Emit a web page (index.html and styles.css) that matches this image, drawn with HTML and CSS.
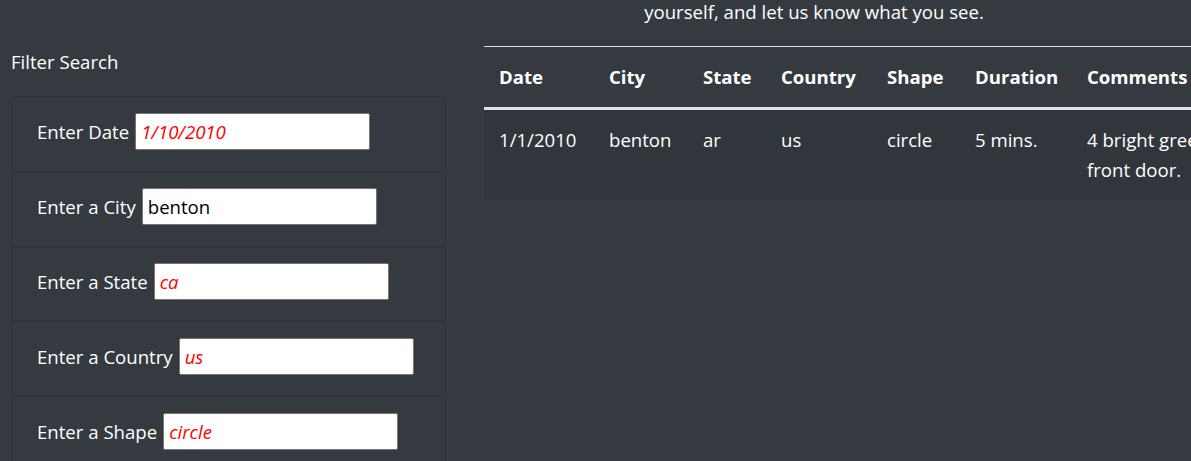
FILE: index.html
```html
<!DOCTYPE html>
<html lang="en">
<head>
<meta charset="utf-8">
<title>UFO Sightings</title>
<link rel="stylesheet" href="styles.css">
</head>
<body>
<div class="page">
  <aside class="sidebar">
    <h2 class="filter-title">Filter Search</h2>
    <ul class="filters">
      <li class="filter-item"><label class="filter-label" for="date">Enter Date</label><input class="filter-input" id="date" type="text" placeholder="1/10/2010"></li>
      <li class="filter-item"><label class="filter-label" for="city">Enter a City</label><input class="filter-input" id="city" type="text" value="benton"></li>
      <li class="filter-item"><label class="filter-label" for="state">Enter a State</label><input class="filter-input" id="state" type="text" placeholder="ca"></li>
      <li class="filter-item"><label class="filter-label" for="country">Enter a Country</label><input class="filter-input" id="country" type="text" placeholder="us"></li>
      <li class="filter-item"><label class="filter-label" for="shape">Enter a Shape</label><input class="filter-input" id="shape" type="text" placeholder="circle"></li>
    </ul>
  </aside>
  <main class="content">
    <p class="intro">yourself, and let us know what you see.</p>
    <table class="ufo-table">
      <thead>
        <tr>
          <th class="col-date">Date</th>
          <th class="col-city">City</th>
          <th class="col-state">State</th>
          <th class="col-country">Country</th>
          <th class="col-shape">Shape</th>
          <th class="col-duration">Duration</th>
          <th class="col-comments">Comments</th>
        </tr>
      </thead>
      <tbody>
        <tr>
          <td>1/1/2010</td>
          <td>benton</td>
          <td>ar</td>
          <td>us</td>
          <td>circle</td>
          <td>5 mins.</td>
          <td class="comment">4 bright green circles high in the sky going in circles then one of the four lights went in the direction of my<br>front door.</td>
        </tr>
      </tbody>
    </table>
  </main>
</div>
</body>
</html>
```

FILE: styles.css
```css
html {
  overflow: hidden;
}

body {
  margin: 0;
  background: #343a40;
  color: #ffffff;
  font-family: "Open Sans", "Noto Sans", sans-serif;
  font-size: 18.6px;
  line-height: 28.8px;
}

.page {
  display: grid;
  grid-template-columns: 434px 660px;
  column-gap: 38px;
  padding-left: 12px;
  align-items: start;
}

.filter-title {
  margin: 48px 0 19.6px -1px;
  font-size: 18.6px;
  font-weight: 400;
  line-height: 28.8px;
}

.filters {
  list-style: none;
  margin: 0;
  padding: 0;
  border: 1px solid #2d3237;
  border-radius: 5px;
}

.filter-item {
  display: flex;
  align-items: center;
  height: 75px;
  box-sizing: border-box;
  padding: 16px 24px 0;
  align-items: flex-start;
  border-bottom: 1px solid #2d3237;
}

.filter-item:last-child {
  border-bottom: none;
}

.filter-label {
  white-space: nowrap;
  line-height: 37px;
}

.filter-input {
  margin-left: 6px;
  width: 235px;
  height: 37px;
  box-sizing: border-box;
  border: 1px solid #767676;
  border-radius: 2px;
  padding: 0 5px;
  background: #ffffff;
  color: #000000;
  font-family: "Open Sans", "Noto Sans", sans-serif;
  font-size: 18.6px;
}

.filter-input::placeholder {
  color: #ff0000;
  font-style: italic;
  opacity: 1;
}

.content {
  min-width: 0;
}

.intro {
  margin: -2px 0 19px;
  text-align: center;
}

.ufo-table {
  border-collapse: collapse;
  table-layout: fixed;
  width: 1100px;
}

.ufo-table th,
.ufo-table td {
  padding: 15px;
  line-height: 30px;
  text-align: left;
  vertical-align: top;
}

.ufo-table th {
  font-weight: 700;
  border-top: 1px solid #dee2e6;
  border-bottom: 3px solid #dee2e6;
  white-space: nowrap;
}

.ufo-table tbody tr {
  background: #31363c;
}

.comment {
  white-space: nowrap;
}

.col-date { width: 80px; }
.col-city { width: 64px; }
.col-state { width: 48px; }
.col-country { width: 76px; }
.col-shape { width: 58px; }
.col-duration { width: 82px; }
.col-comments { width: 482px; }
```
